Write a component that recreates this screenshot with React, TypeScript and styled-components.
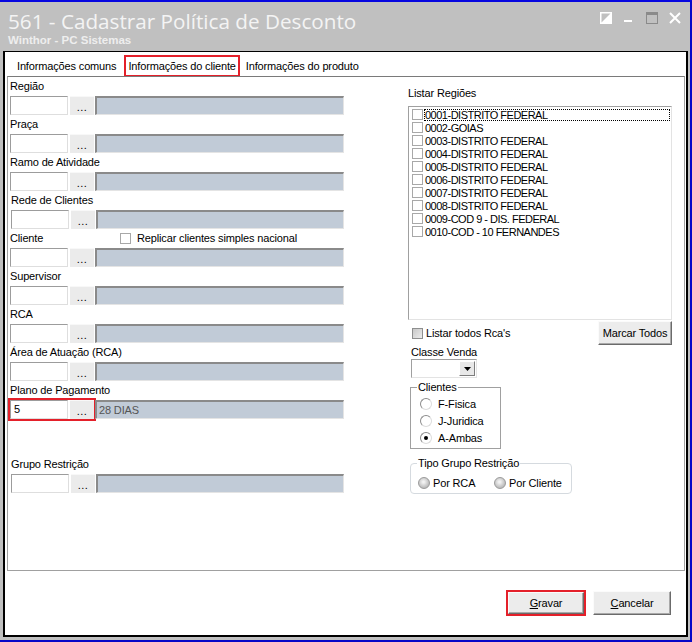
import React from "react";
import styled, { createGlobalStyle } from "styled-components";

const GlobalStyle = createGlobalStyle`
  html, body {
    margin: 0;
    padding: 0;
  }
  body {
    font-family: "Liberation Sans", Arial, sans-serif;
    font-size: 11px;
    letter-spacing: -0.15px;
    color: #000;
    background: #c0c0c0;
  }
`;

const regions = [
  "0001-DISTRITO FEDERAL",
  "0002-GOIAS",
  "0003-DISTRITO FEDERAL",
  "0004-DISTRITO FEDERAL",
  "0005-DISTRITO FEDERAL",
  "0006-DISTRITO FEDERAL",
  "0007-DISTRITO FEDERAL",
  "0008-DISTRITO FEDERAL",
  "0009-COD 9 - DIS. FEDERAL",
  "0010-COD - 10 FERNANDES",
];

type Field = {
  label: string;
  code?: string;
  desc?: string;
  nudge?: boolean;
  replicate?: boolean;
  marked?: boolean;
};

const fields: Field[] = [
  { label: "Região" },
  { label: "Praça" },
  { label: "Ramo de Atividade" },
  { label: "Rede de Clientes", nudge: true },
  { label: "Cliente", replicate: true },
  { label: "Supervisor" },
  { label: "RCA" },
  { label: "Área de Atuação (RCA)" },
  { label: "Plano de Pagamento", code: "5", desc: "28 DIAS", marked: true },
];

const RED = "#e4202a";

const Window = styled.div`
  width: 692px;
  height: 642px;
  box-sizing: border-box;
  background: #c0c0c0;
  border-top: 2px solid #0606e0;
  border-right: 2px solid #0606c8;
  border-bottom: 2px solid #0606c8;
  display: flex;
  flex-direction: column;
`;

const TitleBar = styled.div`
  height: 49px;
  flex: none;
  display: flex;
  justify-content: space-between;
  padding: 0 9px 0 8px;
  box-sizing: border-box;
`;

const Titles = styled.div`
  display: flex;
  flex-direction: column;
  padding-top: 6px;
`;

const Caption = styled.div`
  font-family: "Open Sans", "Liberation Sans", sans-serif;
  font-size: 20.7px;
  line-height: 26px;
  letter-spacing: 0;
  color: #f4f4f4;
  white-space: nowrap;
`;

const SubCaption = styled.div`
  font-size: 11.5px;
  font-weight: bold;
  line-height: 13px;
  letter-spacing: 0;
  color: #eeeeee;
`;

const WinButtons = styled.div`
  display: flex;
  gap: 11px;
  padding-top: 10px;
`;

const Panel = styled.div`
  flex: 1;
  margin: 0 2px 3px 3px;
  background: #fff;
  border: 2px solid #000;
  border-top-width: 1px;
  display: flex;
  flex-direction: column;
`;

const TabStrip = styled.div`
  height: 24px;
  flex: none;
  display: flex;
  align-items: center;
  padding-left: 8px;
`;

const Tab = styled.div<{ $active?: boolean }>`
  height: 18px;
  line-height: 18px;
  padding: 0 ${(p) => (p.$active ? "2px" : "4px")};
  margin-top: 3px;
  white-space: nowrap;
  box-shadow: ${(p) => (p.$active ? `0 0 0 2px ${RED}` : "none")};
  margin-left: ${(p) => (p.$active ? "6px" : "0")};
  margin-right: ${(p) => (p.$active ? "4px" : "0")};
`;

const TabPage = styled.div`
  height: 495px;
  flex: none;
  box-sizing: border-box;
  margin: 0 1px 0 2px;
  border: 1px solid #a0a0a0;
  border-top-color: #7a7a7a;
  display: flex;
`;

const LeftCol = styled.div`
  width: 336px;
  padding-left: 2px;
  box-sizing: border-box;
  display: flex;
  flex-direction: column;
`;

const FieldBlock = styled.div<{ $nudge?: boolean; $gap?: number }>`
  display: flex;
  flex-direction: column;
  padding-left: ${(p) => (p.$nudge ? 1 : 0)}px;
  margin-top: ${(p) => p.$gap ?? 0}px;
`;

const FieldLabel = styled.div`
  height: 19px;
  line-height: 19px;
  display: grid;
  grid-template-columns: 110px auto;
  align-items: center;
  white-space: nowrap;
`;

const FieldRow = styled.div`
  height: 19px;
  display: flex;
`;

const Marked = styled.div`
  display: flex;
  box-shadow: 0 0 0 2px ${RED};
`;

const CodeInput = styled.div`
  width: 58px;
  height: 19px;
  box-sizing: border-box;
  border: 1px solid;
  border-color: #9c9c9c #dedede #dedede #9c9c9c;
  background: #fff;
  padding-left: 3px;
  line-height: 17px;
`;

const LookupButton = styled.div`
  width: 24px;
  height: 19px;
  margin-left: 2px;
  box-sizing: border-box;
  background: #ebebeb;
  border-top: 1px solid #f8f8f8;
  text-align: center;
  line-height: 20px;
  letter-spacing: 0.5px;
`;

const DescBox = styled.div`
  flex: 1;
  margin-left: 1px;
  box-sizing: border-box;
  background: #c1cbd7;
  border-left: 2px solid #8a8a8a;
  border-top: 2px solid #8a8a8a;
  border-right: 1px solid #e4e4e4;
  border-bottom: 1px solid #e4e4e4;
  color: #555;
  padding-left: 2px;
  line-height: 16px;
`;

const Check = styled.span<{ $shaded?: boolean }>`
  width: 11px;
  height: 11px;
  flex: none;
  box-sizing: border-box;
  border: 1px solid ${(p) => (p.$shaded ? "#8e8f8f" : "#a8a8a8")};
  background: ${(p) =>
    p.$shaded ? "linear-gradient(135deg, #c8c8c8, #ececec)" : "#fff"};
`;

const CheckLine = styled.div<{ $gap?: number }>`
  display: flex;
  align-items: center;
  gap: ${(p) => p.$gap ?? 6}px;
  white-space: nowrap;
`;

const RightCol = styled.div`
  width: 264px;
  margin-left: 64px;
  padding-top: 9px;
  display: flex;
  flex-direction: column;
`;

const SmallLabel = styled.div<{ $indent?: number }>`
  line-height: 14px;
  padding-left: ${(p) => p.$indent ?? 0}px;
`;

const ListBox = styled.div`
  height: 214px;
  margin-top: 6px;
  box-sizing: border-box;
  border: 1px solid;
  border-color: #a0a0a0 #e3e3e3 #e3e3e3 #a0a0a0;
  padding: 1px 1px 0 3px;
`;

const ListItem = styled.div`
  height: 13px;
  display: flex;
  align-items: center;
`;

const ItemText = styled.span<{ $focused?: boolean }>`
  flex: 1;
  margin-left: 1px;
  padding-left: 1px;
  line-height: 12px;
  letter-spacing: -0.5px;
  white-space: nowrap;
  outline: ${(p) => (p.$focused ? "1px dotted #000" : "none")};
  outline-offset: -1px;
`;

const RcaRow = styled.div`
  height: 24px;
  margin-top: 1px;
  display: flex;
  align-items: center;
  justify-content: space-between;
  padding-left: 4px;
`;

const Button = styled.div<{ $w: number; $h: number }>`
  width: ${(p) => p.$w}px;
  height: ${(p) => p.$h}px;
  box-sizing: border-box;
  background: #ececec;
  border: 1px solid;
  border-color: #fbfbfb #6b6b6b #6b6b6b #fbfbfb;
  box-shadow: inset -1px -1px 0 #a9a9a9;
  display: flex;
  align-items: center;
  justify-content: center;
  white-space: nowrap;
`;

const Combo = styled.div`
  width: 66px;
  height: 19px;
  margin-left: 3px;
  box-sizing: border-box;
  border: 1px solid;
  border-color: #a0a0a0 #e3e3e3 #e3e3e3 #a0a0a0;
  background: #fff;
  display: flex;
  justify-content: flex-end;
  padding: 1px;
`;

const ComboArrow = styled.div`
  width: 16px;
  box-sizing: border-box;
  background: #e8e8e8;
  border: 1px solid;
  border-color: #fff #7d7d7d #7d7d7d #fff;
  display: flex;
  align-items: center;
  justify-content: center;
`;

const Group = styled.fieldset<{ $w: number; $round?: boolean; $gap: number }>`
  width: ${(p) => p.$w}px;
  margin: ${(p) => p.$gap}px 0 0 2px;
  padding: 0;
  box-sizing: border-box;
  min-width: 0;
  border: 1px solid ${(p) => (p.$round ? "#d5dadf" : "#a0a0a0")};
  border-radius: ${(p) => (p.$round ? 4 : 0)}px;
`;

const Legend = styled.legend`
  margin-left: 6px;
  padding: 0 1px;
  line-height: 13px;
  white-space: nowrap;
`;

const RadioStack = styled.div`
  padding: 1px 0 2px 9px;
  display: flex;
  flex-direction: column;
`;

const RadioInline = styled.div`
  display: grid;
  grid-template-columns: 76px auto;
  padding: 4px 0 2px 7px;
`;

const RadioLine = styled.div<{ $gap: number }>`
  height: 17px;
  display: flex;
  align-items: center;
  gap: ${(p) => p.$gap}px;
  white-space: nowrap;
`;

const RadioDot = styled.span<{ $checked?: boolean; $muted?: boolean }>`
  width: 12px;
  height: 12px;
  flex: none;
  box-sizing: border-box;
  border-radius: 50%;
  border: 1px solid;
  border-color: ${(p) =>
    p.$muted ? "#9a9a9a" : "#8c8c8c #dcdcdc #dcdcdc #8c8c8c"};
  background: ${(p) =>
    p.$muted
      ? "radial-gradient(circle at 45% 40%, #f2f2f2 10%, #c4c4c4 60%, #a8a8a8)"
      : "#fff"};
  display: flex;
  align-items: center;
  justify-content: center;

  &::after {
    content: "";
    display: ${(p) => (p.$checked ? "block" : "none")};
    width: 4px;
    height: 4px;
    border-radius: 50%;
    background: #000;
  }
`;

const Footer = styled.div`
  flex: 1;
  display: flex;
  justify-content: flex-end;
  align-items: center;
  gap: 9px;
  padding: 0 15px 1px 0;
`;

const GravarMark = styled.div`
  display: flex;
  box-shadow: 0 0 0 2px ${RED};
`;

const FieldEntry = ({ f, gap }: { f: Field; gap?: number }) => {
  const controls = (
    <>
      <CodeInput>{f.code}</CodeInput>
      <LookupButton>...</LookupButton>
    </>
  );
  return (
    <FieldBlock $nudge={f.nudge} $gap={gap}>
      <FieldLabel>
        <span>{f.label}</span>
        {f.replicate && (
          <CheckLine>
            <Check />
            Replicar clientes simples nacional
          </CheckLine>
        )}
      </FieldLabel>
      <FieldRow>
        {f.marked ? <Marked>{controls}</Marked> : controls}
        <DescBox>{f.desc}</DescBox>
      </FieldRow>
    </FieldBlock>
  );
};

const App = () => {
  return (
    <>
      <GlobalStyle />
      <Window>
        <TitleBar>
          <Titles>
            <Caption>561 - Cadastrar Política de Desconto</Caption>
            <SubCaption>Winthor - PC Sistemas</SubCaption>
          </Titles>
          <WinButtons>
            <svg width="12" height="12" viewBox="0 0 12 12">
              <rect x="0.75" y="0.75" width="10.5" height="10.5" fill="none" stroke="#fff" strokeWidth="1.5" />
              <polygon points="11,1 11,11 1,11" fill="#fff" />
            </svg>
            <svg width="12" height="12" viewBox="0 0 12 12">
              <rect x="1" y="8" width="8" height="2" fill="#fff" />
            </svg>
            <svg width="12" height="12" viewBox="0 0 12 12">
              <rect x="0.5" y="0.5" width="11" height="11" fill="none" stroke="#8a8a8a" strokeWidth="1" />
              <rect x="0" y="0" width="12" height="3" fill="#8a8a8a" />
            </svg>
            <svg width="12" height="12" viewBox="0 0 12 12">
              <path d="M1 1 L11 11 M11 1 L1 11" stroke="#fff" strokeWidth="2" />
            </svg>
          </WinButtons>
        </TitleBar>

        <Panel>
          <TabStrip>
            <Tab>Informações comuns</Tab>
            <Tab $active>Informações do cliente</Tab>
            <Tab>Informações do produto</Tab>
          </TabStrip>

          <TabPage>
            <LeftCol>
              {fields.map((f) => (
                <FieldEntry key={f.label} f={f} />
              ))}
              <FieldEntry f={{ label: "Grupo Restrição", nudge: true }} gap={36} />
            </LeftCol>

            <RightCol>
              <SmallLabel>Listar Regiões</SmallLabel>
              <ListBox>
                {regions.map((r, i) => (
                  <ListItem key={r}>
                    <Check />
                    <ItemText $focused={i === 0}>{r}</ItemText>
                  </ListItem>
                ))}
              </ListBox>

              <RcaRow>
                <CheckLine $gap={3}>
                  <Check $shaded />
                  Listar todos Rca's
                </CheckLine>
                <Button $w={74} $h={24}>Marcar Todos</Button>
              </RcaRow>

              <SmallLabel $indent={3}>Classe Venda</SmallLabel>
              <Combo>
                <ComboArrow>
                  <svg width="7" height="4" viewBox="0 0 7 4">
                    <polygon points="0,0 7,0 3.5,4" fill="#000" />
                  </svg>
                </ComboArrow>
              </Combo>

              <Group $w={91} $gap={3}>
                <Legend>Clientes</Legend>
                <RadioStack>
                  <RadioLine $gap={6}>
                    <RadioDot />
                    F-Fisica
                  </RadioLine>
                  <RadioLine $gap={6}>
                    <RadioDot />
                    J-Juridica
                  </RadioLine>
                  <RadioLine $gap={6}>
                    <RadioDot $checked />
                    A-Ambas
                  </RadioLine>
                </RadioStack>
              </Group>

              <Group $w={162} $gap={8} $round>
                <Legend>Tipo Grupo Restrição</Legend>
                <RadioInline>
                  <RadioLine $gap={3}>
                    <RadioDot $muted />
                    Por RCA
                  </RadioLine>
                  <RadioLine $gap={3}>
                    <RadioDot $muted />
                    Por Cliente
                  </RadioLine>
                </RadioInline>
              </Group>
            </RightCol>
          </TabPage>

          <Footer>
            <GravarMark>
              <Button $w={76} $h={22}>
                <span>
                  <u>G</u>ravar
                </span>
              </Button>
            </GravarMark>
            <Button $w={78} $h={24}>
              <span>
                <u>C</u>ancelar
              </span>
            </Button>
          </Footer>
        </Panel>
      </Window>
    </>
  );
};

export default App;
